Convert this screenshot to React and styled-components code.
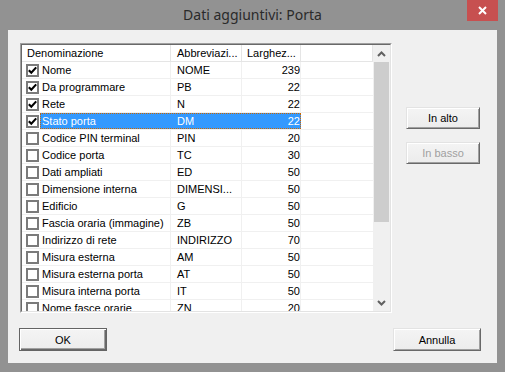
import React from 'react';
import styled, { createGlobalStyle } from 'styled-components';

const GlobalStyle = createGlobalStyle`
  html, body {
    margin: 0;
    padding: 0;
    background: #929292;
    overflow: hidden;
  }
`;

const Window = styled.div`
  width: 505px;
  height: 372px;
  display: flex;
  flex-direction: column;
  background: #929292;
  font-family: "Liberation Sans", Arial, sans-serif;
  font-size: 11px;
  color: #000;
`;

const TitleBar = styled.div`
  height: 30px;
  display: grid;
  grid-template-columns: 1fr auto 1fr;
  align-items: start;
`;

const Title = styled.div`
  grid-column: 2;
  line-height: 30px;
  font-family: "Noto Sans", "Open Sans", sans-serif;
  font-size: 14px;
  color: #2a2a2a;
`;

const CloseButton = styled.div`
  grid-column: 3;
  justify-self: end;
  margin-right: 7px;
  width: 31px;
  height: 21px;
  background: #c75050;
  display: flex;
  align-items: center;
  justify-content: center;
`;

const Content = styled.div`
  flex: 1;
  margin: 0 8px 9px 8px;
  background: #f0f0f0;
  padding: 13px 16px 12px 12px;
  display: flex;
  flex-direction: column;
`;

const TopArea = styled.div`
  display: flex;
  gap: 14px;
`;

const ListFrame = styled.div`
  width: 372px;
  height: 270px;
  box-sizing: border-box;
  border: 1px solid;
  border-color: #a0a0a0 #ffffff #ffffff #a0a0a0;
`;

const ListInner = styled.div`
  height: 100%;
  box-sizing: border-box;
  border: 1px solid;
  border-color: #696969 #e3e3e3 #e3e3e3 #696969;
  background: #fff;
  display: flex;
  overflow: hidden;
`;

const Grid = styled.div`
  flex: 1;
  display: flex;
  flex-direction: column;
  overflow: hidden;
`;

const HeaderRow = styled.div`
  height: 17px;
  flex-shrink: 0;
  box-sizing: border-box;
  display: grid;
  grid-template-columns: 149px 71px 59px 1fr;
  border-bottom: 1px solid #e5e5e5;
`;

const HeaderCell = styled.div`
  box-sizing: border-box;
  padding-left: ${p => p.$pad}px;
  border-right: 1px solid #e5e5e5;
  line-height: 16px;
  white-space: nowrap;
  overflow: hidden;
`;

const Row = styled.div`
  height: 17px;
  flex-shrink: 0;
  box-sizing: border-box;
  display: flex;
  border-bottom: 1px solid #f0f0f0;
`;

const CheckCell = styled.div`
  width: 18px;
  flex-shrink: 0;
  padding-left: 4px;
  box-sizing: border-box;
  display: flex;
  align-items: center;
`;

const CheckBox = styled.div`
  width: 13px;
  height: 13px;
  box-sizing: border-box;
  border: 2px solid #7b7b7b;
  background: #fff;
  display: flex;
  align-items: center;
  justify-content: center;
`;

const Selection = styled.div`
  display: flex;
  background: ${p => (p.$active ? '#3399ff' : 'transparent')};
  color: ${p => (p.$active ? '#fff' : '#000')};
  outline: ${p => (p.$active ? '1px dotted #cc6600' : 'none')};
  outline-offset: -1px;
`;

const Cell = styled.div`
  width: ${p => p.$w}px;
  box-sizing: border-box;
  padding: 0 ${p => (p.$right ? 5 : 0)}px 0 ${p => p.$pad}px;
  border-right: 1px solid ${p => (p.$active ? '#3399ff' : '#f0f0f0')};
  text-align: ${p => (p.$right ? 'right' : 'left')};
  line-height: 16px;
  white-space: nowrap;
  overflow: hidden;
`;

const Filler = styled.div`
  flex: 1;
`;

const ScrollBar = styled.div`
  width: 17px;
  flex-shrink: 0;
  background: #f0f0f0;
  display: flex;
  flex-direction: column;
`;

const ScrollArrow = styled.div`
  height: 17px;
  display: flex;
  align-items: center;
  justify-content: center;
  margin-top: ${p => (p.$bottom ? 'auto' : '0')};
`;

const Thumb = styled.div`
  height: 160px;
  margin: 0 1px;
  background: #cdcdcd;
`;

const SideButtons = styled.div`
  display: flex;
  flex-direction: column;
  gap: 13px;
  padding-top: 64px;
`;

const Button = styled.div`
  width: ${p => p.$w}px;
  height: ${p => p.$h || 23}px;
  box-sizing: border-box;
  display: flex;
  align-items: center;
  justify-content: center;
  background: linear-gradient(#f4f4f4, #ececec);
  border: 1px solid;
  border-color: ${p => (p.$default ? '#646464' : '#e3e3e3 #696969 #696969 #e3e3e3')};
  box-shadow: ${p =>
    p.$default
      ? 'inset 1px 1px #fff, inset -1px -1px #696969, inset -2px -2px #a0a0a0'
      : 'inset 1px 1px #fff, inset -1px -1px #a0a0a0'};
  color: ${p => (p.$disabled ? '#a0a0a0' : '#000')};
  margin-left: ${p => p.$ml || 0}px;
`;

const BottomBar = styled.div`
  margin-top: 15px;
  display: flex;
  justify-content: space-between;
`;

const rows = [
  { name: 'Nome', abbr: 'NOME', width: 239, checked: true },
  { name: 'Da programmare', abbr: 'PB', width: 22, checked: true },
  { name: 'Rete', abbr: 'N', width: 22, checked: true },
  { name: 'Stato porta', abbr: 'DM', width: 22, checked: true, selected: true },
  { name: 'Codice PIN terminal', abbr: 'PIN', width: 20 },
  { name: 'Codice porta', abbr: 'TC', width: 30 },
  { name: 'Dati ampliati', abbr: 'ED', width: 50 },
  { name: 'Dimensione interna', abbr: 'DIMENSI...', width: 50 },
  { name: 'Edificio', abbr: 'G', width: 50 },
  { name: 'Fascia oraria (immagine)', abbr: 'ZB', width: 50 },
  { name: 'Indirizzo di rete', abbr: 'INDIRIZZO', width: 70 },
  { name: 'Misura esterna', abbr: 'AM', width: 50 },
  { name: 'Misura esterna porta', abbr: 'AT', width: 50 },
  { name: 'Misura interna porta', abbr: 'IT', width: 50 },
  { name: 'Nome fasce orarie', abbr: 'ZN', width: 20 },
];

const Check = () => (
  <svg width="9" height="9" viewBox="0 0 9 9">
    <polyline points="0.8,4.2 3.3,6.8 8.2,1.4" fill="none" stroke="#000" strokeWidth="2.1" />
  </svg>
);

const Chevron = ({ down }) => (
  <svg width="9" height="6" viewBox="0 0 9 6">
    <polyline
      points={down ? '1,1 4.5,4.5 8,1' : '1,5 4.5,1.5 8,5'}
      fill="none"
      stroke="#606060"
      strokeWidth="2"
    />
  </svg>
);

const App = () => (
  <>
    <GlobalStyle />
    <Window>
      <TitleBar>
        <Title>Dati aggiuntivi: Porta</Title>
        <CloseButton>
          <svg width="9" height="9" viewBox="0 0 9 9">
            <path d="M1 1 L8 8 M8 1 L1 8" stroke="#fff" strokeWidth="2" />
          </svg>
        </CloseButton>
      </TitleBar>
      <Content>
        <TopArea>
          <ListFrame>
            <ListInner>
              <Grid>
                <HeaderRow>
                  <HeaderCell $pad={5}>Denominazione</HeaderCell>
                  <HeaderCell $pad={6}>Abbreviazi...</HeaderCell>
                  <HeaderCell $pad={5}>Larghez...</HeaderCell>
                  <HeaderCell />
                </HeaderRow>
                {rows.map(r => (
                  <Row key={r.name}>
                    <CheckCell>
                      <CheckBox>{r.checked && <Check />}</CheckBox>
                    </CheckCell>
                    <Selection $active={r.selected}>
                      <Cell $w={131} $pad={2} $active={r.selected}>{r.name}</Cell>
                      <Cell $w={71} $pad={6} $active={r.selected}>{r.abbr}</Cell>
                      <Cell $w={59} $right $active={r.selected}>{r.width}</Cell>
                    </Selection>
                    <Filler />
                  </Row>
                ))}
              </Grid>
              <ScrollBar>
                <ScrollArrow><Chevron /></ScrollArrow>
                <Thumb />
                <ScrollArrow $bottom><Chevron down /></ScrollArrow>
              </ScrollBar>
            </ListInner>
          </ListFrame>
          <SideButtons>
            <Button $w={74} $h={22}>In alto</Button>
            <Button $w={74} $h={22} $disabled>In basso</Button>
          </SideButtons>
        </TopArea>
        <BottomBar>
          <Button $w={88} $ml={-1} $default>OK</Button>
          <Button $w={88}>Annulla</Button>
        </BottomBar>
      </Content>
    </Window>
  </>
);

export default App;
